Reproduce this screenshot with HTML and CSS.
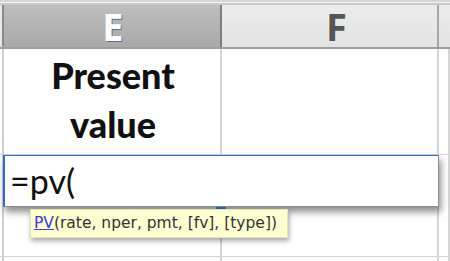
FILE: index.html
```html
<!DOCTYPE html>
<html lang="en">

<head>
    <meta charset="UTF-8">
    <title>Present value</title>
    <link rel="stylesheet" href="styles.css">
</head>

<body>
    <div class="sheet">
        <div class="topbar"></div>
        <div class="row head">
            <div class="cell gutter"></div>
            <div class="cell colhead sel">E</div>
            <div class="cell colhead">F</div>
            <div class="cell colhead"></div>
        </div>
        <div class="row tall">
            <div class="cell gutter"></div>
            <div class="cell title">Present<br>value</div>
            <div class="cell"></div>
            <div class="cell"></div>
        </div>
        <div class="row tall2">
            <div class="cell gutter"></div>
            <div class="cell active"></div>
            <div class="cell"></div>
            <div class="cell"></div>
        </div>
        <div class="row">
            <div class="cell gutter"></div>
            <div class="cell"></div>
            <div class="cell"></div>
            <div class="cell"></div>
        </div>

        <!-- formula editor over the cells -->
        <div class="editor">=pv(</div>
        <div class="handle"></div>
        <div class="tip"><a class="fn">PV</a>(rate, nper, pmt, [fv], [type])</div>
    </div>
</body>

</html>
```

FILE: styles.css
```css
body {
    margin: 0;
    background: #fff;
}

.sheet {
    position: relative;
    width: 450px;
    height: 261px;
    overflow: hidden;
    font-family: 'Open Sans', sans-serif;
}

.topbar {
    height: 5px;
    box-sizing: border-box;
    border-top: 2px solid #d6d6d6;
    border-bottom: 2px solid #c9c9c9;
    background: #f4f4f4;
}

.row {
    display: grid;
    grid-template-columns: 4px 218px 217px 1fr;
    height: 102px;
}

.head {
    height: 44px;
    border-bottom: 2px solid #9e9e9e;
    box-sizing: border-box;
}

.tall {
    height: 106px;
}

.tall2 {
    height: 102px;
}

.cell {
    box-sizing: border-box;
    border-right: 2px solid #d4d4d4;
    border-bottom: 1px solid #d4d4d4;
}

.gutter {
    border-right: 2px solid #cfcfcf;
    background: #fff;
}

.head .gutter {
    border-right: 2px solid #8a8a8a;
    background: #e9e9e9;
}

.colhead {
    background: linear-gradient(#ececec, #e3e3e3);
    border-right: 2px solid #a8a8a8;
    border-bottom: none;
    font-weight: 700;
    font-size: 38px;
    line-height: 42px;
    color: #555;
    text-align: center;
    padding-left: 14px;
}

.colhead.sel {
    background: linear-gradient(#bdbdbd, #a9a9a9);
    border-right: 2px solid #7d7d7d;
    color: #fff;
    padding-left: 2px;
    text-shadow: 1px 1px 0 #5c6a9a;
}

.title {
    font-family: 'Lato', sans-serif;
    font-weight: 900;
    font-size: 36px;
    line-height: 49px;
    text-align: center;
    color: #111;
    padding-top: 2px;
    padding-left: 2px;
}

.active {
    border-top: 1px solid #2f6cc9;
}

.editor {
    position: absolute;
    left: 3px;
    top: 155px;
    width: 436px;
    height: 52px;
    box-sizing: border-box;
    background: #fff;
    border: 1px solid #8a8a8a;
    border-top-color: #2f6cc9;
    border-left: 2px solid #2f6cc9;
    box-shadow: 2px 5px 7px rgba(0, 0, 0, 0.45);
    font-family: 'Lato', sans-serif;
    font-size: 34px;
    line-height: 50px;
    padding-left: 5px;
    color: #111;
}

.handle {
    position: absolute;
    left: 216px;
    top: 207px;
    width: 10px;
    height: 3px;
    background: #2f5fa8;
}

.tip {
    position: absolute;
    left: 30px;
    top: 209px;
    height: 29px;
    width: 258px;
    box-sizing: border-box;
    padding: 4px 0 0 3px;
    background: #ffffd2;
    border: 1px solid #e3e3b8;
    box-shadow: 1px 3px 5px rgba(0, 0, 0, 0.35);
    font-family: 'DejaVu Sans', sans-serif;
    font-size: 15.5px;
    line-height: 19px;
    color: #333;
    white-space: nowrap;
}

.fn {
    color: #3b3bd8;
    text-decoration: underline;
}
```
